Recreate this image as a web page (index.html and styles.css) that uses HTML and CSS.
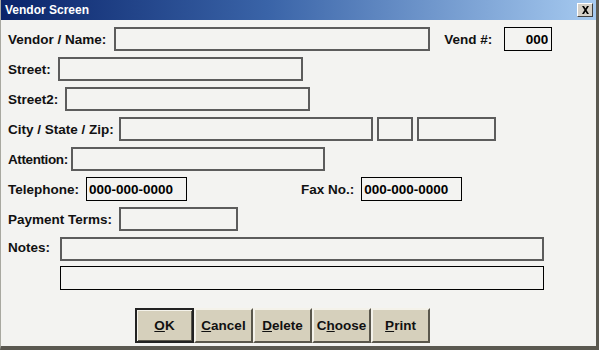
FILE: index.html
```html
<!DOCTYPE html>
<html lang="en">
<head>
    <meta charset="UTF-8">
    <title>Vendor Screen</title>
    <link rel="stylesheet" href="styles.css">
</head>
<body>
    <div class="window">
        <div class="titlebar">
            <span class="title">Vendor Screen</span>
            <button class="close" type="button">
                <svg width="9" height="8" viewBox="0 0 9 8">
                    <path d="M1 0h2l1.5 2.5L6 0h2L5.5 4 8 8H6L4.5 5.5 3 8H1l2.5-4z" fill="#000"/>
                </svg>
            </button>
        </div>

        <form class="content">
            <div class="row">
                <label>Vendor / Name:</label>
                <input type="text" class="field w-name">
                <label class="push-vend">Vend #:</label>
                <input type="text" class="field flat w-vend num" value="000">
            </div>
            <div class="row">
                <label>Street:</label>
                <input type="text" class="field w-street">
            </div>
            <div class="row">
                <label>Street2:</label>
                <input type="text" class="field w-street">
            </div>
            <div class="row">
                <label>City / State / Zip:</label>
                <input type="text" class="field w-city pull-city">
                <input type="text" class="field w-state">
                <input type="text" class="field w-zip">
            </div>
            <div class="row">
                <label class="tight">Attention:</label>
                <input type="text" class="field w-city pull-attn">
            </div>
            <div class="row">
                <label>Telephone:</label>
                <input type="text" class="field flat w-phone" value="000-000-0000">
                <label class="push-fax">Fax No.:</label>
                <input type="text" class="field flat w-phone" value="000-000-0000">
            </div>
            <div class="row">
                <label>Payment Terms:</label>
                <input type="text" class="field w-terms">
            </div>
            <div class="notes">
                <label>Notes:</label>
                <div class="notes-fields">
                    <input type="text" class="field w-notes">
                    <input type="text" class="field flat w-notes">
                </div>
            </div>

            <div class="buttons">
                <button type="button" class="btn default"><u>O</u>K</button>
                <button type="button" class="btn"><u>C</u>ancel</button>
                <button type="button" class="btn"><u>D</u>elete</button>
                <button type="button" class="btn">C<u>h</u>oose</button>
                <button type="button" class="btn"><u>P</u>rint</button>
            </div>
        </form>
    </div>
</body>
</html>
```

FILE: styles.css
```css
body {
    margin: 0;
    font-family: "Liberation Sans", Arial, sans-serif;
    background-color: #f3f3f1;
}
.window {
    width: 599px;
    height: 350px;
    box-sizing: border-box;
    border-left: 1px solid #a8a8a0;
    border-right: 3px solid #5a5850;
    border-bottom: 4px solid #5a5850;
    background-color: #f3f3f1;
}
.titlebar {
    height: 20px;
    display: flex;
    align-items: center;
    justify-content: space-between;
    padding: 0 3px 0 4px;
    background: linear-gradient(to right, #0a246a, #3a64a8 45%, #a6caf0);
}
.title {
    color: #fff;
    font-weight: bold;
    font-size: 12px;
}
.close {
    width: 16px;
    height: 14px;
    padding: 0;
    display: flex;
    align-items: center;
    justify-content: center;
    background-color: #d4d0c8;
    border: 1px solid;
    border-color: #fff #404040 #404040 #fff;
}
.content {
    padding: 7px 0 0 7px;
    display: flex;
    flex-direction: column;
    gap: 6px;
}
.row {
    display: flex;
    align-items: center;
    gap: 7px;
    height: 24px;
}
label {
    font-weight: bold;
    font-size: 13.5px;
    color: #111;
}
label.tight {
    letter-spacing: -0.4px;
}
.field {
    height: 24px;
    box-sizing: border-box;
    border: 2px solid #5c5c5c;
    background-color: #f3f3f1;
    font-family: "Liberation Sans", Arial, sans-serif;
    font-weight: bold;
    font-size: 13.5px;
    padding: 0 2px;
    margin: 0;
}
.flat {
    border: 1px solid #000;
}
.num {
    text-align: right;
    padding-right: 3px;
}
.w-name { width: 316px; margin-left: 1px; }
.w-vend { width: 48px; margin-left: 5px; }
.w-street { width: 245px; }
.w-city { width: 254px; }
.w-state { width: 36px; margin-left: -3px; }
.w-zip { width: 79px; margin-left: -3px; }
.w-phone { width: 101px; }
.w-terms { width: 119px; }
.w-notes { width: 484px; }
.pull-city { margin-left: -2px; }
.pull-attn { margin-left: -4px; }
.push-vend { margin-left: 7px; }
.push-fax { margin-left: 107px; }
.notes {
    display: flex;
    gap: 10px;
}
.notes label {
    padding-top: 3px;
}
.notes-fields {
    display: flex;
    flex-direction: column;
    gap: 5px;
}
.buttons {
    display: flex;
    margin: 12px 0 0 127px;
}
.btn {
    width: 59px;
    height: 35px;
    background-color: #d6d0bc;
    border: 2px solid;
    border-color: #f4f2ea #5a574c #5a574c #f4f2ea;
    font-family: "Liberation Sans", Arial, sans-serif;
    font-weight: bold;
    font-size: 13.5px;
    color: #111;
    padding: 0;
}
.btn.default {
    border: 2px solid #222;
    box-shadow: inset 1px 1px 0 #f4f2ea, inset -1px -1px 0 #5a574c;
}
```
